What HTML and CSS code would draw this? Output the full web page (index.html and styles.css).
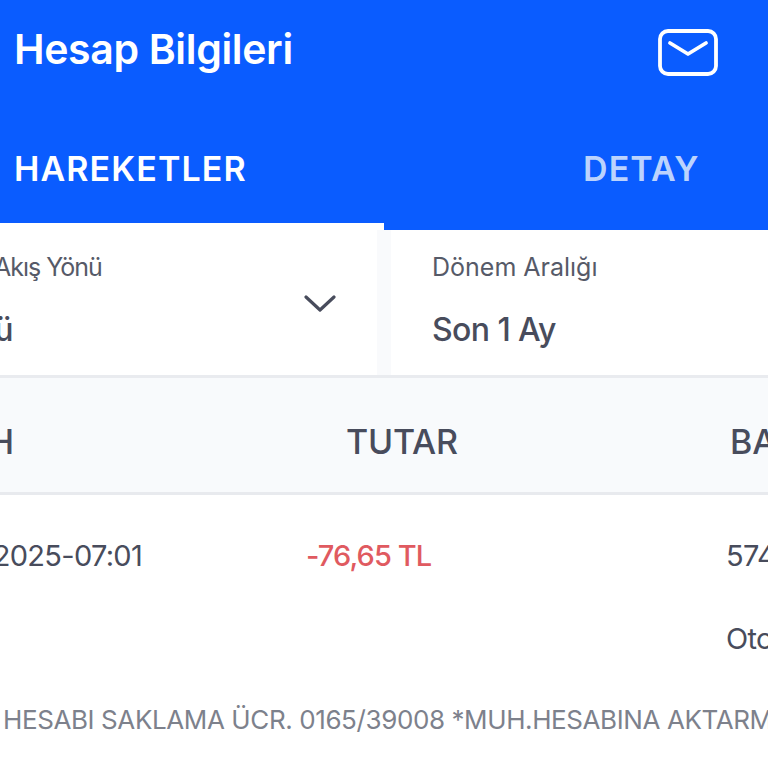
FILE: index.html
```html
<!DOCTYPE html>
<html lang="tr">
<head>
  <meta name="viewport" content="width=device-width, initial-scale=1.0">
  <title>Hesap Bilgileri</title>
  <link rel="stylesheet" href="styles.css">
</head>
<body>

<div class="header">
  <div class="title-bar">
    <div class="title">Hesap Bilgileri</div>
    <svg class="mail-icon" viewBox="0 0 60 48" fill="none" stroke="#fff" stroke-width="3.8" stroke-linecap="round" stroke-linejoin="round">
      <rect x="2" y="2" width="56" height="43" rx="8" />
      <path d="M12 14 L30 25 L48 14" />
    </svg>
  </div>
  <div class="tabs">
    <div class="tab active">HAREKETLER</div>
    <div class="tab muted">DETAY</div>
  </div>
</div>

<div class="filters">
  <div class="filter filter-left">
    <div class="filter-text">
      <div class="filter-label clip-a">Akış Yönü</div>
      <div class="filter-value clip-b">Tümü</div>
    </div>
    <svg class="chevron" viewBox="0 0 32 17" fill="none" stroke="#484c5c" stroke-width="3.2" stroke-linecap="round" stroke-linejoin="round">
      <path d="M2 2 L16 15 L30 2" />
    </svg>
  </div>
  <div class="filter filter-right">
    <div class="filter-text">
      <div class="filter-label">Dönem Aralığı</div>
      <div class="filter-value">Son 1 Ay</div>
    </div>
  </div>
</div>

<div class="table-head">
  <div class="head-date">TARİH</div>
  <div class="head-amount">TUTAR</div>
  <div class="head-balance">BAKİYE</div>
</div>

<div class="tx">
  <div class="tx-main">
    <div class="tx-date">2025-07:01</div>
    <div class="tx-amount">-76,65 TL</div>
    <div class="tx-balance">
      <div>574</div>
      <div class="tx-channel">Oto</div>
    </div>
  </div>
  <div class="tx-desc">HESABI SAKLAMA ÜCR. 0165/39008 *MUH.HESABINA AKTARMA</div>
</div>

</body>
</html>
```

FILE: styles.css
```css
body {
  margin: 0;
  width: 768px;
  height: 768px;
  background: #fff;
  font-family: "Inter", "Lato", sans-serif;
  color: #484c5c;
  overflow: hidden;
  white-space: nowrap;
}

/* Blue header */
.header {
  height: 230px;
  background: #0a5cff;
  color: #fff;
  display: flex;
  flex-direction: column;
}

.title-bar {
  height: 98px;
  padding: 0 50px 0 14px;
  display: flex;
  align-items: center;
  justify-content: space-between;
}

.title {
  font-size: 41px;
  font-weight: 600;
  letter-spacing: -0.35px;
}

.mail-icon {
  width: 60px;
  height: 48px;
  margin-top: 8px;
}

/* Tabs */
.tabs {
  flex: 1;
  display: flex;
}

.tab {
  font-size: 34px;
  font-weight: 600;
  line-height: 142px;
  box-sizing: border-box;
  height: 132px;
  letter-spacing: 1.1px;
}

.tab.active {
  width: 384px;
  padding-left: 14px;
  border-bottom: 7px solid #fff;
}

.tab.muted {
  padding-left: 199px;
  color: #bcd3fd;
}

/* Filters */
.filters {
  height: 145px;
  display: flex;
  background: #f9fafc;
  border-bottom: 3px solid #e9ebef;
}

.filter {
  background: #fff;
  display: flex;
}

.filter-left {
  width: 377px;
  padding-right: 41px;
  box-sizing: border-box;
  justify-content: space-between;
}

.filter-right {
  flex: 1;
  margin-left: 14px;
  padding-left: 41px;
}

.filter-text {
  padding-top: 21px;
}

.filter-label {
  font-size: 25px;
  line-height: 32px;
  color: #565a68;
}

.filter-value {
  margin-top: 26px;
  font-size: 32px;
  line-height: 42px;
  font-weight: 500;
  letter-spacing: -0.6px;
}

.clip-a {
  margin-left: -6px;
  letter-spacing: -1px;
}

.clip-b {
  margin-left: -71px;
}

.chevron {
  width: 32px;
  height: 17px;
  margin-top: 65px;
}

/* Table */
.table-head {
  height: 117px;
  padding-top: 12px;
  box-sizing: border-box;
  display: flex;
  align-items: center;
  background: #f8fafc;
  border-bottom: 3px solid #e8eaee;
  font-size: 34px;
  font-weight: 500;
  letter-spacing: -0.2px;
}

.head-date {
  flex: none;
  width: 114px;
  margin-left: -100px;
  text-align: right;
}

.head-amount {
  flex: none;
  width: 384px;
  margin-left: 332px;
}

.tx {
  padding-top: 42px;
}

.tx-main {
  display: flex;
  font-size: 29px;
  line-height: 38px;
  letter-spacing: -0.7px;
}

.tx-date {
  flex: none;
  width: 163px;
  margin-left: -21px;
  text-align: right;
}

.tx-amount {
  flex: none;
  width: 420px;
  margin-left: 164px;
  font-weight: 500;
  letter-spacing: -0.9px;
  color: #e05a60;
}

.tx-channel {
  margin-top: 45px;
}

.tx-desc {
  margin-top: 44px;
  padding-left: 3px;
  font-size: 26px;
  line-height: 36px;
  letter-spacing: -0.4px;
  color: #7d818c;
}
```
